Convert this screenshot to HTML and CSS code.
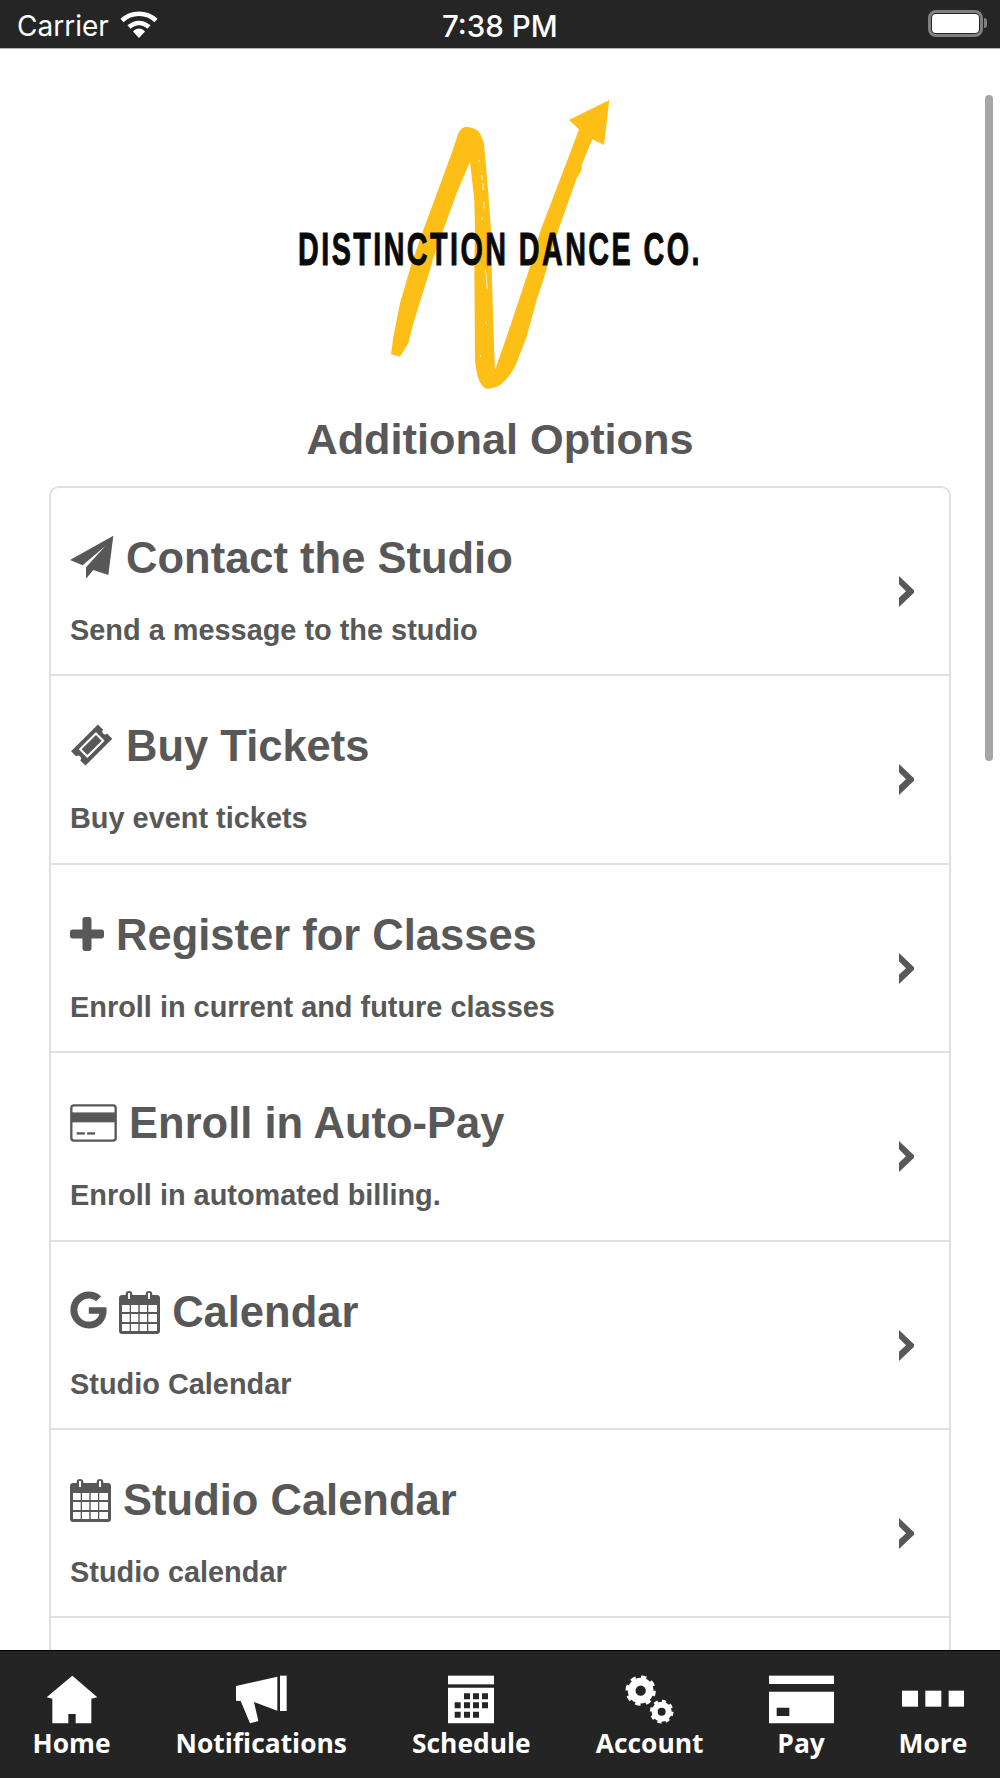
FILE: index.html
```html
<!DOCTYPE html>
<html lang="en">
<head>
<meta charset="utf-8">
<title>Additional Options</title>
<link rel="stylesheet" href="styles.css">
</head>
<body>
<div class="app">
  <header class="status">
    <div class="status-left">
      <span class="carrier">Carrier</span>
      <svg class="wifi" viewBox="0 0 38 28"><path d="M2 10.500C11.500 1.500 26.500 1.500 36 10.500" class="wifi-arc"/><path d="M9 17C15 11.500 23 11.500 29 17" class="wifi-arc"/><path d="M13 21.500C16.500 17.500 21.500 17.500 25 21.500L19 28Z" class="wifi-fill"/></svg>
    </div>
    <span class="status-time">7:38 PM</span>
    <div class="battery"><span class="battery-level"></span></div>
  </header>

  <main class="content">
    <div class="scrollbar"></div>
    <svg class="logo" viewBox="0 0 1320 1002" role="img" aria-label="Distinction Dance Co. logo">
      <path class="logo-stroke" d="M333 823L340 770L360 670L395 550L430 450L515 220L535 160C542 146 550 140 560 140C580 143 595 150 600 160L612 190L625 340L633 450L635 560L640 740L645 870L680 770L720 650L750 560L780 455L870 220L897 148L867 120L988 60L972 195L937 178L905 255L905 270L890 295L835 450L805 550L790 600L770 660L740 770L715 835C705 870 680 900 660 915C640 925 625 928 615 925C600 915 590 890 585 840L583 560L585 450L583 360L570 245L530 340L490 450L458 540L450 570L400 730L385 790L360 830Z"/>
      <path class="logo-speck" d="M597 240V246M606 285V300M609 310V330M612 365V385M606 410V420M615 570C622 590 618 610 622 628M618 725V733M602 825V830"/>
      <text class="logo-text" text-anchor="middle" transform="translate(660 554) scale(0.615 1)">DISTINCTION DANCE CO.</text>
    </svg>
    <h1 class="page-title">Additional Options</h1>

    <ul class="menu">
      <li class="menu-row">
        <div class="menu-text">
          <h2 class="menu-title"><svg class="ico ico-plane" viewBox="90 165 132 132"><path d="M220 167L90 240L128 256L196 198L138 262L138 296L160 270L205 285Z"/></svg> Contact the Studio</h2>
          <p class="menu-sub">Send a message to the studio</p>
        </div>
        <svg class="chevron" viewBox="57 47 45 93"><path d="M57 47L102 90V97L57 140V112L78 93L57 72Z"/></svg>
      </li>
      <li class="menu-row">
        <div class="menu-text">
          <h2 class="menu-title"><svg class="ico ico-ticket" viewBox="92 735 128 124"><g transform="rotate(-45 155 797)"><path d="M99 767H211V789A8 8 0 0 0 211 805V827H99V805A8 8 0 0 0 99 789Z"/><rect class="ticket-inner" x="122" y="782" width="66" height="30"/></g></svg> Buy Tickets</h2>
          <p class="menu-sub">Buy event tickets</p>
        </div>
        <svg class="chevron" viewBox="57 47 45 93"><path d="M57 47L102 90V97L57 140V112L78 93L57 72Z"/></svg>
      </li>
      <li class="menu-row">
        <div class="menu-text">
          <h2 class="menu-title"><svg class="ico ico-plus" viewBox="0 0 34 34"><path d="M12.500 2.500C12.500 1 13.500 0 15 0H19C20.500 0 21.500 1 21.500 2.500V12.500H31.500C33 12.500 34 13.500 34 15V19C34 20.500 33 21.500 31.500 21.500H21.500V31.500C21.500 33 20.500 34 19 34H15C13.500 34 12.500 33 12.500 31.500V21.500H2.500C1 21.500 0 20.500 0 19V15C0 13.500 1 12.500 2.500 12.500H12.500Z"/></svg> Register for Classes</h2>
          <p class="menu-sub">Enroll in current and future classes</p>
        </div>
        <svg class="chevron" viewBox="57 47 45 93"><path d="M57 47L102 90V97L57 140V112L78 93L57 72Z"/></svg>
      </li>
      <li class="menu-row">
        <div class="menu-text">
          <h2 class="menu-title"><svg class="ico ico-card" viewBox="90 130 142 114"><rect class="card-outline" x="94" y="134" width="134" height="106" rx="8"/><rect x="94" y="155" width="134" height="30"/><rect x="110" y="215" width="25" height="7"/><rect x="142" y="215" width="24" height="7"/></svg> Enroll in Auto-Pay</h2>
          <p class="menu-sub">Enroll in automated billing.</p>
        </div>
        <svg class="chevron" viewBox="57 47 45 93"><path d="M57 47L102 90V97L57 140V112L78 93L57 72Z"/></svg>
      </li>
      <li class="menu-row">
        <div class="menu-text">
          <h2 class="menu-title"><svg class="ico ico-google" viewBox="0 0 488 512"><path d="M488 261.800C488 403.300 391.100 504 248 504 110.800 504 0 393.200 0 256S110.800 8 248 8c66.800 0 123 24.500 166.300 64.900l-67.500 64.900C258.500 52.600 94.300 116.600 94.300 256c0 86.500 69.100 156.600 153.700 156.600 98.200 0 135-70.400 140.800-106.900H248v-85.300h236.100c2.300 12.700 3.900 24.900 3.900 41.400z"/></svg> <svg class="ico ico-cal" viewBox="0 0 41 43"><use href="#calendar"/></svg> Calendar</h2>
          <p class="menu-sub">Studio Calendar</p>
        </div>
        <svg class="chevron" viewBox="57 47 45 93"><path d="M57 47L102 90V97L57 140V112L78 93L57 72Z"/></svg>
      </li>
      <li class="menu-row">
        <div class="menu-text">
          <h2 class="menu-title"><svg class="ico ico-cal" viewBox="0 0 41 43"><use href="#calendar"/></svg> Studio Calendar</h2>
          <p class="menu-sub">Studio calendar</p>
        </div>
        <svg class="chevron" viewBox="57 47 45 93"><path d="M57 47L102 90V97L57 140V112L78 93L57 72Z"/></svg>
      </li>
      <li class="menu-row"></li>
    </ul>
  </main>

  <nav class="tabs">
    <div class="tab">
      <svg class="tab-icon" viewBox="136 105 156 147"><path d="M215 107L290 172L272 176V250H225V222H203V250H155V176L138 172Z"/></svg>
      <span class="tab-label">Home</span>
    </div>
    <div class="tab">
      <svg class="tab-icon" viewBox="705 105 158 147"><path d="M708 138L832 110V212L762 186L775 243L750 250L722 183L708 182Z"/><rect x="840" y="107" width="20" height="106"/></svg>
      <span class="tab-label">Notifications</span>
    </div>
    <div class="tab">
      <svg class="tab-icon" viewBox="1345 105 138 147"><rect x="1345" y="107" width="138" height="26"/><path fill-rule="evenodd" d="M1345 143H1483V250H1345ZM1393 160V178H1411V160ZM1420 160V178H1438V160ZM1447 160V178H1465V160ZM1365 187V205H1383V187ZM1393 187V205H1411V187ZM1420 187V205H1438V187ZM1447 187V205H1465V187ZM1365 215V233H1383V215ZM1393 215V233H1411V215ZM1420 215V233H1438V215Z"/></svg>
      <span class="tab-label">Schedule</span>
    </div>
    <div class="tab">
      <svg class="tab-icon" viewBox="375 105 152 147">
        <circle class="gear-ring" cx="425" cy="152" r="27" stroke-width="23"/>
        <circle class="gear-teeth" cx="425" cy="152" r="40" stroke-width="11" stroke-dasharray="15.700 15.700"/>
        <circle class="gear-ring" cx="488" cy="215" r="21" stroke-width="18"/>
        <circle class="gear-teeth" cx="488" cy="215" r="31" stroke-width="9" stroke-dasharray="12.200 12.150"/>
      </svg>
      <span class="tab-label">Account</span>
    </div>
    <div class="tab">
      <svg class="tab-icon" viewBox="807 105 195 147"><rect x="807" y="107" width="195" height="25"/><path fill-rule="evenodd" d="M807 155H1002V250H807ZM830 203V228H868V203Z"/></svg>
      <span class="tab-label">Pay</span>
    </div>
    <div class="tab">
      <svg class="tab-icon" viewBox="1205 105 188 147"><rect x="1205" y="152" width="48" height="48"/><rect x="1275" y="152" width="48" height="48"/><rect x="1345" y="152" width="48" height="48"/></svg>
      <span class="tab-label">More</span>
    </div>
  </nav>
</div>

<svg class="defs" width="0" height="0">
  <defs>
    <g id="calendar">
      <path fill-rule="evenodd" d="M3 4H38C39.700 4 41 5.300 41 7V40C41 41.700 39.700 43 38 43H3C1.300 43 0 41.700 0 40V7C0 5.300 1.300 4 3 4ZM3 14V21H10.700V14ZM12 14V21H19.300V14ZM20.700 14V21H28V14ZM29.300 14V21H38V14ZM3 23V31H10.700V23ZM12 23V31H19.300V23ZM20.700 23V31H28V23ZM29.300 23V31H38V23ZM3 33V40H10.700V33ZM12 33V40H19.300V33ZM20.700 33V40H28V33ZM29.300 33V40H38V33Z"/>
      <rect x="6.700" y="0" width="6.600" height="10.500" rx="3.300"/>
      <rect x="26.700" y="0" width="6.600" height="10.500" rx="3.300"/>
      <rect class="cal-slit" x="9" y="2" width="2" height="6"/>
      <rect class="cal-slit" x="29" y="2" width="2" height="6"/>
    </g>
  </defs>
</svg>
</body>
</html>
```
FILE: styles.css
```css
* { box-sizing: border-box; }
html, body { margin: 0; padding: 0; background: #fff; }
.app {
  width: 1000px;
  height: 1778px;
  display: flex;
  flex-direction: column;
  overflow: hidden;
  font-family: "Liberation Sans", Arial, sans-serif;
}
.defs { position: absolute; }

/* status bar */
.status {
  height: 49px;
  flex: none;
  background: #252525;
  border-bottom: 1px solid #b5b5b5;
  color: #fff;
  display: flex;
  align-items: center;
  justify-content: space-between;
  padding: 0 17px 0 17px;
  position: relative;
  font-family: Inter, "Liberation Sans", sans-serif;
  font-size: 28px;
}
.status-left { display: flex; align-items: center; gap: 11px; }
.carrier { margin-top: 3px; }
.wifi { width: 38px; height: 28px; }
.wifi-arc { fill: none; stroke: #fff; stroke-width: 4.500; }
.wifi-fill { fill: #fff; }
.status-time { position: absolute; left: 442px; top: 8px; font-size: 29.500px; font-weight: 500; }
.battery {
  width: 55px;
  height: 27px;
  border: 3px solid #808080;
  border-radius: 8px;
  padding: 1px;
  margin-bottom: 1px;
  position: relative;
}
.battery::after {
  content: "";
  position: absolute;
  right: -7px;
  top: 5px;
  width: 3px;
  height: 10px;
  background: #808080;
  border-radius: 0 3px 3px 0;
}
.battery-level { display: block; height: 100%; background: #fff; border-radius: 4px; }

/* content */
.content {
  flex: 1;
  min-height: 0;
  overflow: hidden;
  position: relative;
  display: flex;
  flex-direction: column;
  align-items: center;
  padding-top: 31px;
}
.scrollbar {
  position: absolute;
  right: 7px;
  top: 46px;
  width: 8px;
  height: 666px;
  background: #a6a6a6;
  border-radius: 4px;
}
.logo { width: 440px; height: 334px; flex: none; display: block; }
.logo-stroke { fill: #fdbe16; }
.logo-speck { fill: none; stroke: #fff6d8; stroke-width: 3; }
.logo-text {
  font-family: "Liberation Sans", sans-serif;
  font-weight: 700;
  font-size: 140px;
  letter-spacing: 12px;
  fill: #0a0a0a;
  stroke: #0a0a0a;
  stroke-width: 3px;
}
.page-title {
  margin: 0 0 22px;
  font-size: 43.300px;
  line-height: 50px;
  font-weight: 700;
  color: #585858;
}

.menu {
  list-style: none;
  margin: 0;
  padding: 0;
  width: 902px;
  flex: none;
  border: 2px solid #e0e0e0;
  border-radius: 10px;
  background: #fff;
}
.menu-row {
  height: 188.400px;
  display: flex;
  align-items: flex-start;
  justify-content: space-between;
  padding: 45px 35px 0 19px;
  border-bottom: 2px solid #e0e0e0;
  color: #585858;
}
.menu-title {
  margin: 0;
  font-size: 43.500px;
  line-height: 50px;
  font-weight: 700;
}
.menu-sub {
  margin: 31px 0 0;
  font-size: 28.900px;
  line-height: 33px;
  font-weight: 700;
}
.ico { fill: #585858; }
.ico-plane { width: 44px; height: 44px; vertical-align: -6px; }
.ico-ticket { width: 44px; height: 42px; vertical-align: -5px; }
.ticket-inner { fill: #585858; stroke: #fff; stroke-width: 6; }
.ico-plus { width: 34px; height: 34px; vertical-align: -1px; }
.ico-card { width: 47px; height: 38px; vertical-align: -4px; }
.card-outline { fill: #fff; stroke: #585858; stroke-width: 7; }
.ico-google { width: 37px; height: 38px; vertical-align: -2px; }
.ico-cal { width: 41px; height: 43px; vertical-align: -7px; }
.cal-slit { fill: #fff; }
.chevron { width: 15px; height: 31px; fill: #585858; flex: none; margin-top: 43px; }

/* tab bar */
.tabs {
  height: 128px;
  flex: none;
  background: #242424;
  border-top: 1px solid #000;
  display: flex;
  justify-content: space-around;
  align-items: flex-start;
  padding-top: 24px;
  position: relative;
}
.tab { display: flex; flex-direction: column; align-items: center; color: #fff; }
.tab-icon { height: 49px; fill: #fff; display: block; }
.tab-label {
  font-family: "Open Sans", sans-serif;
  font-weight: 700;
  font-size: 26.400px;
  line-height: 36px;
  margin-top: 1px;
}
.gear-ring { fill: none; stroke: #fff; }
.gear-teeth { fill: none; stroke: #fff; }
```
